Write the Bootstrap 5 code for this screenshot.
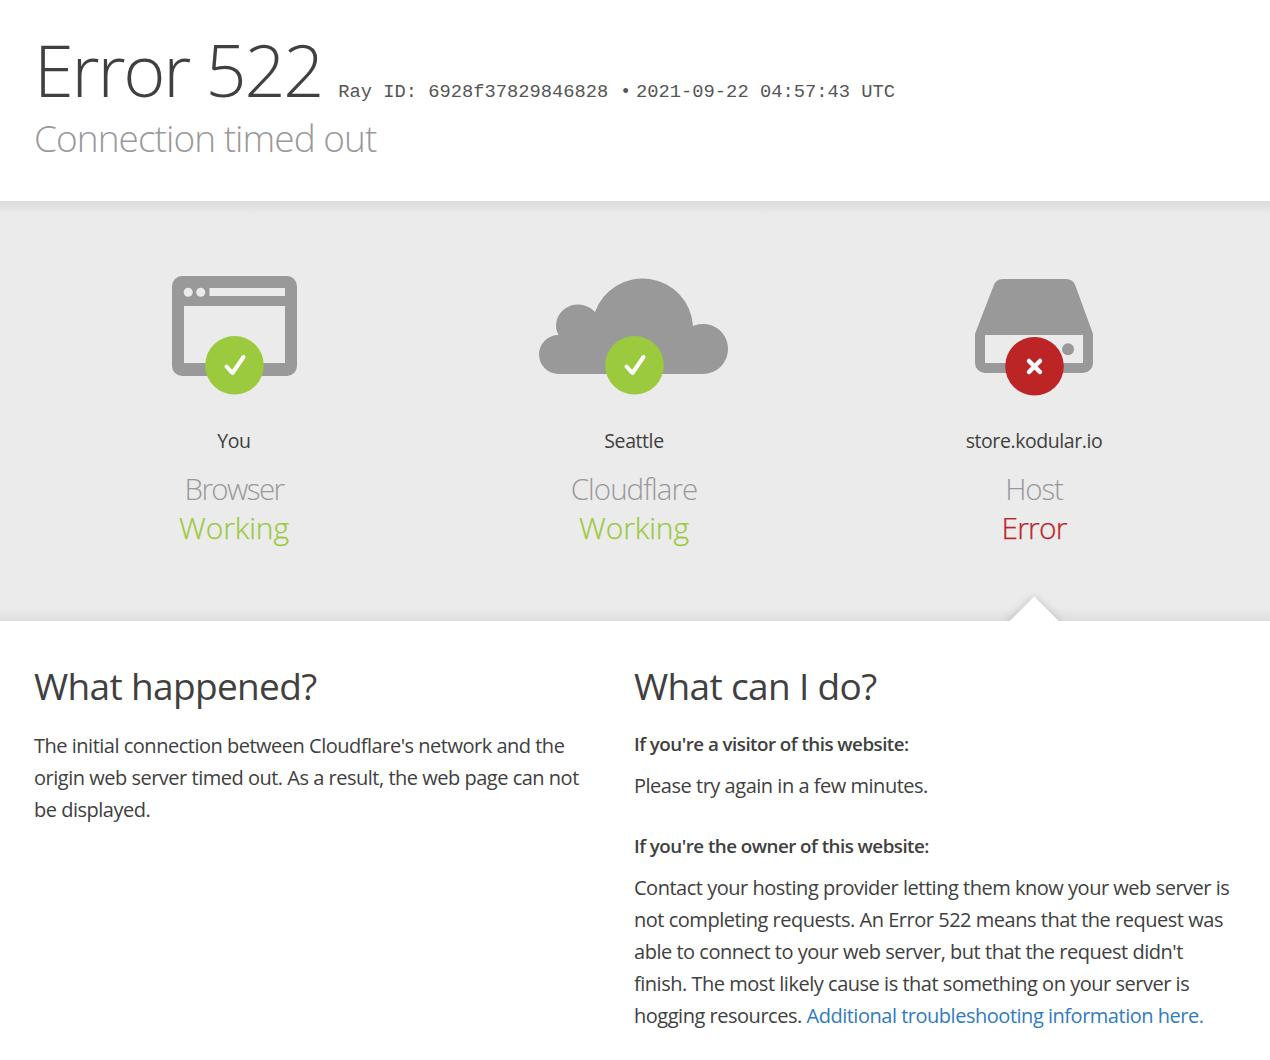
<!DOCTYPE html>
<html lang="en">
<head>
<meta charset="utf-8">
<title>Error 522</title>
<link href="https://cdn.jsdelivr.net/npm/bootstrap@5.3.0/dist/css/bootstrap.min.css" rel="stylesheet">
<style>
body { font-family: "Open Sans", "Liberation Sans", sans-serif; color: #404040; background: #fff; font-size: 20px; line-height: 32px; letter-spacing: -.48px; overflow: hidden; }
.page-wrap { width: 1200px; margin-left: 34px; }
.top-head { height: 201px; padding-top: 27px; }
.err-title { font-size: 72px; font-weight: 300; line-height: 84px; margin: 0; letter-spacing: -2.2px; }
.ray { font-family: "Liberation Mono", "Courier New", monospace; font-size: 18.75px; letter-spacing: 0; margin-left: 16px; line-height: 1; color: #555; }
.ray-dot { margin: 0 5px 0 12px; font-size: 18px; }
.sub-title { font-size: 37px; font-weight: 300; line-height: 46px; color: #999; margin: 4px 0 0; letter-spacing: -.95px; }
.band { position: relative; height: 420px; overflow: hidden; padding-top: 69px;
  background: linear-gradient(rgba(0,0,0,.07), rgba(0,0,0,0) 13px), linear-gradient(to top, rgba(0,0,0,.06), rgba(0,0,0,0) 14px), #ebebeb; }
.node-icon { display: block; width: 400px; height: 130px; }
.node-place { margin-top: 25px; line-height: 32px; font-size: 19.5px; letter-spacing: -.42px; }
.node-kind { font-size: 29.5px; font-weight: 300; color: #999; line-height: 38px; margin: 13px 0 0; letter-spacing: -1.1px; }
.kind-tight { letter-spacing: -1.6px; }
.kind-open { letter-spacing: -.95px; }
.node-state { font-size: 30px; font-weight: 300; line-height: 40px; letter-spacing: -.1px; -webkit-text-stroke: .25px currentColor; }
.state-ok { color: #9bca3e; }
.state-bad { color: #bd2426; letter-spacing: -.8px; }
.notch { position: absolute; left: 1015.700px; top: 402.700px; width: 36.500px; height: 36.500px; background: #fff; transform: rotate(45deg); box-shadow: 0 0 8px rgba(0,0,0,.18); }
.details { padding-top: 40px; }
.detail-title { font-size: 37px; font-weight: 400; line-height: 50px; margin: 0 0 17px; letter-spacing: -.65px; }
.detail-left { padding-right: 40px; }
.detail-left .detail-text { padding-top: 2px; letter-spacing: -.49px; }
.detail-lead { font-weight: 600; margin: 0 0 10px; letter-spacing: -.52px; font-size: 18.75px; }
.detail-text { margin: 0; }
.gap-after { margin-bottom: 28px; }
.more-link { color: #2f7bbf; text-decoration: none; }
</style>
</head>
<body>
<header class="top-head">
  <div class="page-wrap">
    <h1 class="err-title d-flex align-items-baseline">Error 522<span class="ray">Ray ID: 6928f37829846828<span class="ray-dot">•</span>2021-09-22 04:57:43 UTC</span></h1>
    <h2 class="sub-title">Connection timed out</h2>
  </div>
</header>
<section class="band">
  <div class="page-wrap">
    <div class="row g-0 text-center">
      <div class="col-4">
        <svg class="node-icon" viewBox="34 270 400 130" aria-hidden="true">
          <path fill="#999" fill-rule="evenodd" d="M182 276h105a10 10 0 0 1 10 10v80a10 10 0 0 1-10 10H182a10 10 0 0 1-10-10V286a10 10 0 0 1 10-10ZM184 306v57h101v-57ZM209.500 288v8H285v-8Z"/>
          <circle cx="188.200" cy="292.300" r="4.500" fill="#ebebeb"/>
          <circle cx="200.700" cy="292.300" r="4.500" fill="#ebebeb"/>
          <circle cx="234.500" cy="365.300" r="29.300" fill="#9bca3e"/>
          <path d="M226.500 366.500l6 6.500 11-16" fill="none" stroke="#fff" stroke-width="4" stroke-linecap="round" stroke-linejoin="round"/>
        </svg>
        <div class="node-place">You</div>
        <h3 class="node-kind kind-tight">Browser</h3>
        <div class="node-state state-ok">Working</div>
      </div>
      <div class="col-4">
        <svg class="node-icon" viewBox="434 270 400 130" aria-hidden="true">
          <path fill="#999" d="M558.500 374A19.500 19.500 0 0 1 558.500 335A22 21 0 0 1 595 312A50.500 50.500 0 0 1 693 326A25 25 0 0 1 728 349A25 25 0 0 1 703 374Z"/>
          <circle cx="634.500" cy="365.300" r="29.300" fill="#9bca3e"/>
          <path d="M626.500 366.500l6 6.500 11-16" fill="none" stroke="#fff" stroke-width="4" stroke-linecap="round" stroke-linejoin="round"/>
        </svg>
        <div class="node-place">Seattle</div>
        <h3 class="node-kind kind-open">Cloudflare</h3>
        <div class="node-state state-ok">Working</div>
      </div>
      <div class="col-4">
        <svg class="node-icon" viewBox="834 270 400 130" aria-hidden="true">
          <path fill="#999" fill-rule="evenodd" d="M1003 279h63a10 10 0 0 1 9.500 7l17 46.500a10 10 0 0 1 .5 3.500v27a10 10 0 0 1-10 10H985a10 10 0 0 1-10-10V336a10 10 0 0 1 .5-3.500l18-46.500a10 10 0 0 1 9.500-7ZM985 335v28h98v-28Z"/>
          <circle cx="1068" cy="349.300" r="6" fill="#999"/>
          <circle cx="1034.500" cy="366.300" r="29.300" fill="#bd2426"/>
          <path d="M1029 361l11 11M1040 361l-11 11" fill="none" stroke="#fff" stroke-width="4.500" stroke-linecap="round"/>
        </svg>
        <div class="node-place">store.kodular.io</div>
        <h3 class="node-kind">Host</h3>
        <div class="node-state state-bad">Error</div>
      </div>
    </div>
  </div>
  <div class="notch"></div>
</section>
<section class="details">
  <div class="page-wrap">
    <div class="row g-0">
      <div class="col-6 detail-left">
        <h2 class="detail-title">What happened?</h2>
        <p class="detail-text">The initial connection between Cloudflare's network and the origin web server timed out. As a result, the web page can not be displayed.</p>
      </div>
      <div class="col-6">
        <h2 class="detail-title">What can I do?</h2>
        <p class="detail-lead">If you're a visitor of this website:</p>
        <p class="detail-text gap-after">Please try again in a few minutes.</p>
        <p class="detail-lead">If you're the owner of this website:</p>
        <p class="detail-text">Contact your hosting provider letting them know your web server is not completing requests. An Error 522 means that the request was able to connect to your web server, but that the request didn't finish. The most likely cause is that something on your server is hogging resources. <a class="more-link" href="#">Additional troubleshooting information here.</a></p>
      </div>
    </div>
  </div>
</section>
<script src="https://cdn.jsdelivr.net/npm/bootstrap@5.3.0/dist/js/bootstrap.bundle.min.js"></script>
</body>
</html>
